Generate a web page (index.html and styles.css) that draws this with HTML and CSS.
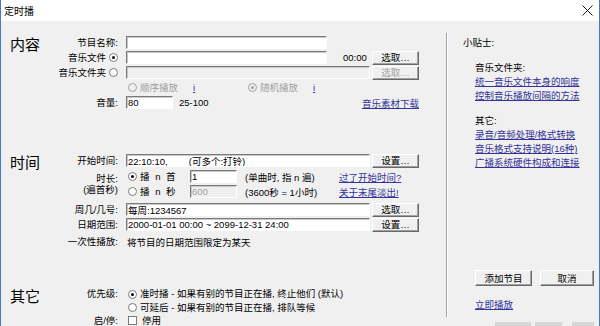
FILE: index.html
```html
<!DOCTYPE html>
<html lang="zh-CN">
  <head>
    <meta charset="UTF-8" />
    <title>定时播</title>
    <link rel="stylesheet" href="styles.css">
  </head>
  <body>
    <div class="window">
      <div class="titlebar">
        <span class="title">定时播</span>
        <svg class="close" width="11" height="11" viewBox="0 0 11 11" aria-label="关闭">
          <path d="M0.5 0.5L10.5 10.5M10.5 0.5L0.5 10.5" stroke="#1a1a1a" stroke-width="1" fill="none" />
        </svg>
      </div>
      <div class="dialog">
        <div class="main">
          <section class="group group-content">
            <div class="group-title">内容</div>
            <div class="rows">
              <div class="row">
                <span class="label">节目名称:</span>
                <div class="field"><input class="edit w-mid" type="text" /></div>
              </div>
              <div class="row">
                <span class="label">音乐文件 <span class="radio on"></span></span>
                <div class="field">
                  <input class="edit w-mid" type="text" />
                  <span class="duration">00:00</span>
                  <button class="btn">选取…</button>
                </div>
              </div>
              <div class="row">
                <span class="label">音乐文件夹 <span class="radio"></span></span>
                <div class="field">
                  <input class="edit w-long" type="text" disabled />
                  <button class="btn" disabled>选取…</button>
                </div>
              </div>
              <div class="row">
                <span class="label"></span>
                <div class="field play-order">
                  <span class="opt opt-first disabled"><span class="radio off"></span>顺序播放<a class="link info" href="#">i</a></span>
                  <span class="opt disabled"><span class="radio off on"></span>随机播放<a class="link info" href="#">i</a></span>
                </div>
              </div>
              <div class="row">
                <span class="label">音量:</span>
                <div class="field">
                  <input class="edit w-short" type="text" value="80" />
                  <span class="range">25-100</span>
                  <a class="link push" href="#">音乐素材下载</a>
                </div>
              </div>
            </div>
          </section>

          <section class="group group-time">
            <div class="group-title">时间</div>
            <div class="rows">
              <div class="row">
                <span class="label">开始时间:</span>
                <div class="field">
                  <input class="edit w-long" type="text" value="22:10:10,        (可多个:打铃)" />
                  <button class="btn">设置…</button>
                </div>
              </div>
              <div class="row row-double">
                <span class="label label-double"><span>时长:</span><span>(遍首秒)</span></span>
                <div class="field field-double">
                  <div class="sub">
                    <span class="opt opt-n"><span class="radio on"></span>播 n 首</span>
                    <input class="edit w-short" type="text" value="1" />
                    <span class="note">(单曲时, 指 n 遍)</span>
                    <a class="link" href="#">过了开始时间?</a>
                  </div>
                  <div class="sub">
                    <span class="opt opt-n"><span class="radio"></span>播 n 秒</span>
                    <input class="edit w-short" type="text" value="600" disabled />
                    <span class="note">(3600秒 = 1小时)</span>
                    <a class="link" href="#">关于末尾淡出!</a>
                  </div>
                </div>
              </div>
              <div class="row row-week">
                <span class="label">周几/几号:</span>
                <div class="field">
                  <input class="edit w-long" type="text" value="每周:1234567" />
                  <button class="btn">选取…</button>
                </div>
              </div>
              <div class="row">
                <span class="label">日期范围:</span>
                <div class="field">
                  <input class="edit w-long" type="text" value="2000-01-01 00:00 ~ 2099-12-31 24:00" />
                  <button class="btn">设置…</button>
                </div>
              </div>
              <div class="row row-once">
                <span class="label">一次性播放:</span>
                <div class="field"><span class="plain">将节目的日期范围限定为某天</span></div>
              </div>
            </div>
          </section>

          <section class="group group-other">
            <div class="group-title">其它</div>
            <div class="rows">
              <div class="row row-tight">
                <span class="label">优先级:</span>
                <div class="field">
                  <span class="opt"><span class="radio on"></span>准时播 - 如果有别的节目正在播, 终止他们 (默认)</span>
                </div>
              </div>
              <div class="row row-tight">
                <span class="label"></span>
                <div class="field">
                  <span class="opt"><span class="radio"></span>可延后 - 如果有别的节目正在播, 排队等候</span>
                </div>
              </div>
              <div class="row row-tight">
                <span class="label">启/停:</span>
                <div class="field">
                  <span class="opt"><span class="check"></span>停用</span>
                </div>
              </div>
            </div>
          </section>
        </div>

        <div class="sep"></div>

        <aside class="tips">
          <div class="tips-head">小贴士:</div>
          <div class="tips-block">
            <div class="tips-sub">音乐文件夹:</div>
            <a class="link" href="#">统一音乐文件本身的响度</a>
            <a class="link" href="#">控制音乐播放间隔的方法</a>
          </div>
          <div class="tips-block">
            <div class="tips-sub">其它:</div>
            <a class="link" href="#">录音/音频处理/格式转换</a>
            <a class="link" href="#">音乐格式支持说明(16种)</a>
            <a class="link" href="#">广播系统硬件构成和连接</a>
          </div>
          <div class="actions">
            <button class="btn btn-add">添加节目</button>
            <button class="btn btn-cancel">取消</button>
          </div>
          <a class="link play-now" href="#">立即播放</a>
          <div class="ghosts"><span></span><span></span><span></span></div>
        </aside>
      </div>
    </div>
  </body>
</html>
```

FILE: styles.css
```css
:root {
  --face: #f0f0f0;
  --shadow: #a0a0a0;
  --dark: #696969;
  --text: #000000;
  --grey-text: #a0a0a0;
  --link: #33339a;
  --frame: #3f7fc8;
}

* {
  box-sizing: border-box;
}

body {
  margin: 0;
  background: #ffffff;
  font-family: "Liberation Sans", "Noto Sans CJK SC", sans-serif;
  font-size: 9.5px;
  color: var(--text);
}

.window {
  width: 600px;
  height: 326px;
  overflow: hidden;
  background: var(--face);
  border-left: 1px solid var(--frame);
  border-right: 1px solid var(--frame);
}

.titlebar {
  height: 21px;
  background: #ffffff;
  display: flex;
  align-items: center;
  justify-content: space-between;
  padding: 0 6px 0 3px;
}

.title {
  font-size: 10px;
  font-weight: 400;
}

.dialog {
  display: flex;
}

.main {
  width: 445px;
  padding-left: 9px;
  flex: none;
}

.group {
  display: flex;
}

.group-content {
  margin-top: 14px;
}

.group-time {
  margin-top: 43px;
}

.group-other {
  margin-top: 38px;
}

.group-title {
  width: 50px;
  flex: none;
  font-size: 15px;
  line-height: 20px;
}

.rows {
  width: 359px;
}

.row {
  display: grid;
  grid-template-columns: 58px 293px;
  column-gap: 8px;
  height: 15px;
  align-items: center;
}

.row-double {
  height: 30px;
  margin-top: 1px;
}

.row-week {
  margin-top: 3px;
}

.row-once {
  margin-top: 2px;
}

.row-tight {
  height: 13px;
}

.row-tight:first-child {
  height: 14px;
}

.label {
  display: flex;
  justify-content: flex-end;
  align-items: center;
  gap: 3px;
  white-space: nowrap;
  line-height: 12px;
}

.label-double {
  flex-direction: column;
  align-items: flex-end;
  gap: 0;
  line-height: 11px;
}

.field {
  display: flex;
  align-items: center;
  white-space: nowrap;
}

.field-double {
  flex-direction: column;
  align-items: stretch;
}

.sub {
  display: flex;
  align-items: center;
  height: 15px;
}

.edit {
  font: inherit;
  color: var(--text);
  height: 13px;
  margin: 0;
  padding: 0 1px;
  background: #ffffff;
  border: 1px solid;
  border-color: #7a7a7a #ffffff #ffffff #7a7a7a;
  box-shadow: inset 1px 1px 0 #c8c8c8;
  outline: none;
}

.edit:disabled {
  background: var(--face);
  color: var(--grey-text);
}

.w-mid {
  width: 201px;
}

.w-long {
  width: 244px;
}

.w-short {
  width: 47px;
}

.btn {
  font: inherit;
  color: var(--text);
  height: 14px;
  width: 47px;
  margin: 0 0 0 auto;
  padding: 0;
  line-height: 11px;
  background: var(--face);
  border: 1px solid;
  border-color: #ffffff var(--dark) var(--dark) #ffffff;
  box-shadow: inset -1px -1px 0 var(--shadow);
}

.btn:disabled {
  color: var(--grey-text);
}

.duration {
  margin-left: 16px;
}

.range {
  margin-left: 6px;
}

.push {
  margin-left: auto;
}

.link {
  color: var(--link);
  text-decoration: underline;
}

.opt {
  display: flex;
  align-items: center;
  gap: 3px;
  padding-left: 2px;
  line-height: 12px;
}

.opt.disabled {
  color: var(--grey-text);
}

.opt-first {
  width: 120px;
}

.opt-n {
  width: 64px;
  word-spacing: 3px;
}

.info {
  margin-left: 12px;
}

.note {
  width: 94px;
  margin-left: 8px;
}

.plain {
  padding-left: 1px;
}

.radio {
  display: inline-block;
  position: relative;
  flex: none;
  width: 9px;
  height: 9px;
  border-radius: 50%;
  border: 1px solid #7a7a7a;
  background: #ffffff;
}

.radio.on::after {
  content: "";
  position: absolute;
  left: 2px;
  top: 2px;
  width: 3px;
  height: 3px;
  border-radius: 50%;
  background: #000000;
}

.radio.off {
  border-color: var(--shadow);
  background: var(--face);
}

.radio.off.on::after {
  background: var(--grey-text);
}

.check {
  display: inline-block;
  flex: none;
  width: 9px;
  height: 9px;
  border: 1px solid #7a7a7a;
  background: #ffffff;
  margin-right: 2px;
}

.sep {
  width: 2px;
  height: 284px;
  margin-top: 12px;
  border-left: 1px solid var(--shadow);
  background: #ffffff;
  flex: none;
}

.tips {
  padding: 15px 0 0 15px;
  line-height: 14px;
}

.tips-block {
  margin-top: 11px;
  padding-left: 12px;
}

.tips-block .link {
  display: block;
  width: max-content;
}

.actions {
  display: flex;
  gap: 8px;
  margin-top: 100px;
  padding-left: 12px;
}

.btn-add,
.btn-cancel {
  margin: 0;
  height: 16px;
  line-height: 13px;
}

.btn-add {
  width: 57px;
}

.btn-cancel {
  width: 54px;
}

.play-now {
  display: block;
  width: max-content;
  margin: 12px 0 0 12px;
}

.ghosts {
  display: flex;
  gap: 4px;
  margin: 10px 0 0 32px;
}

.ghosts span {
  height: 6px;
  background: #d6d6d6;
}

.ghosts span:nth-child(1) {
  width: 36px;
}

.ghosts span:nth-child(2) {
  width: 27px;
}

.ghosts span:nth-child(3) {
  width: 22px;
  margin-left: 6px;
}
```
